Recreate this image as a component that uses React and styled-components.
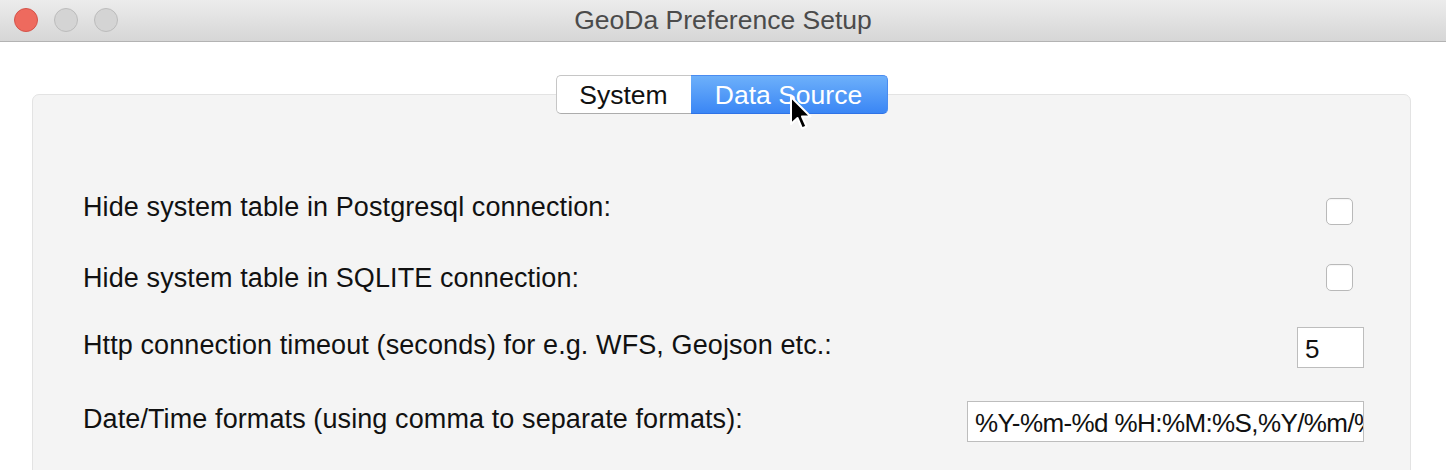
import React from "react";
import styled, { createGlobalStyle } from "styled-components";

const GlobalStyle = createGlobalStyle`
  html, body { margin: 0; padding: 0; background: #ffffff; }
  body { font-family: "Liberation Sans", Arial, sans-serif; }
  * { box-sizing: border-box; }
`;

const Window = styled.div`
  position: relative;
  width: 1446px;
  height: 470px;
  overflow: hidden;
  background: #ffffff;
`;

const TitleBar = styled.div`
  display: grid;
  grid-template-columns: 1fr auto 1fr;
  align-items: center;
  height: 42px;
  border-bottom: 1px solid #b3b3b3;
  background: linear-gradient(#ececec, #d6d6d6);
`;

const Lights = styled.div`
  display: flex;
  gap: 16px;
  padding-left: 14px;
  padding-bottom: 2px;
`;

const Light = styled.span`
  width: 24px;
  height: 24px;
  border-radius: 50%;
  background: ${(p) => (p.$red ? "#ee6a5e" : "#d4d4d4")};
  border: 1px solid ${(p) => (p.$red ? "#d4534a" : "#bcbcbc")};
`;

const Title = styled.div`
  font-size: 26.5px;
  color: #4b4b4b;
`;

const Content = styled.div`
  padding: 33px 35px 0 32px;
`;

const TabRow = styled.div`
  position: relative;
  z-index: 1;
  display: flex;
  justify-content: center;
  margin-bottom: -20px;
`;

const Tab = styled.div`
  height: 39px;
  display: flex;
  align-items: center;
  justify-content: center;
  width: ${(p) => p.$w}px;
  font-size: 26.5px;
  color: ${(p) => (p.$active ? "#ffffff" : "#111111")};
  background: ${(p) =>
    p.$active ? "linear-gradient(#6db0fa, #3a86f5)" : "#ffffff"};
  border: 1px solid ${(p) => (p.$active ? "#4a8cf0" : "#c6c6c6")};
  border-bottom-color: ${(p) => (p.$active ? "#2f73e6" : "#acacac")};
  border-radius: ${(p) => (p.$first ? "5px 0 0 5px" : "0 5px 5px 0")};
  ${(p) => (p.$first ? "border-right: none;" : "border-left: none;")}
  padding-top: 1px;
`;

const Panel = styled.div`
  height: 420px;
  background: #f4f4f4;
  border: 1px solid #e3e3e3;
  border-radius: 7px;
  padding: 83px 46px 0 50px;
`;

const Row = styled.div`
  display: flex;
  justify-content: space-between;
  align-items: center;
  height: ${(p) => p.$h}px;
`;

const Label = styled.div`
  font-size: 27px;
  letter-spacing: 0.1px;
  line-height: 30px;
  color: #111111;
  padding-top: ${(p) => (p.$lift < 0 ? -p.$lift : 0)}px;
  padding-bottom: ${(p) => (p.$lift > 0 ? p.$lift : 0)}px;
`;

const Check = styled.span`
  width: 27px;
  height: 27px;
  margin-right: 11px;
  background: #ffffff;
  border: 1px solid #b9b9b9;
  border-radius: 5px;
  box-shadow: inset 0 1px 1px rgba(0, 0, 0, 0.04);
`;

const Field = styled.input`
  width: ${(p) => p.$w}px;
  height: 41px;
  border: 1px solid #bdbdbd;
  background: #ffffff;
  font-family: "Liberation Sans", Arial, sans-serif;
  font-size: 26px;
  letter-spacing: ${(p) => p.$ls || 0}px;
  color: #111111;
  padding: 3px 0 0 7px;
  outline: none;
  margin: 0;
`;

const Cursor = styled.svg`
  position: absolute;
  left: 789px;
  top: 95px;
  z-index: 5;
`;

export default function App() {
  return (
    <>
      <GlobalStyle />
      <Window>
        <TitleBar>
          <Lights>
            <Light $red />
            <Light />
            <Light />
          </Lights>
          <Title>GeoDa Preference Setup</Title>
          <div />
        </TitleBar>
        <Content>
          <TabRow>
            <Tab $first $w={135}>System</Tab>
            <Tab $active $w={197}>Data Source</Tab>
          </TabRow>
          <Panel>
            <Row $h={66}>
              <Label $lift={8}>Hide system table in Postgresql connection:</Label>
              <Check />
            </Row>
            <Row $h={66}>
              <Label $lift={-2}>Hide system table in SQLITE connection:</Label>
              <Check />
            </Row>
            <Row $h={75}>
              <Label $lift={5}>Http connection timeout (seconds) for e.g. WFS, Geojson etc.:</Label>
              <Field $w={67} readOnly value="5" />
            </Row>
            <Row $h={73}>
              <Label $lift={5}>Date/Time formats (using comma to separate formats):</Label>
              <Field $w={397} $ls={-0.6} readOnly value="%Y-%m-%d %H:%M:%S,%Y/%m/%d %H:%M:%S,%d.%m.%Y %H:%M:%S" />
            </Row>
          </Panel>
        </Content>
        <Cursor width="24" height="38" viewBox="0 0 24 38">
          <path
            d="M2 2 L2 29 L8.5 23 L13 33.5 L17.5 31.5 L13 21.5 L21.5 21.5 Z"
            fill="#000000"
            stroke="#ffffff"
            strokeWidth="2"
            strokeLinejoin="round"
          />
        </Cursor>
      </Window>
    </>
  );
}
